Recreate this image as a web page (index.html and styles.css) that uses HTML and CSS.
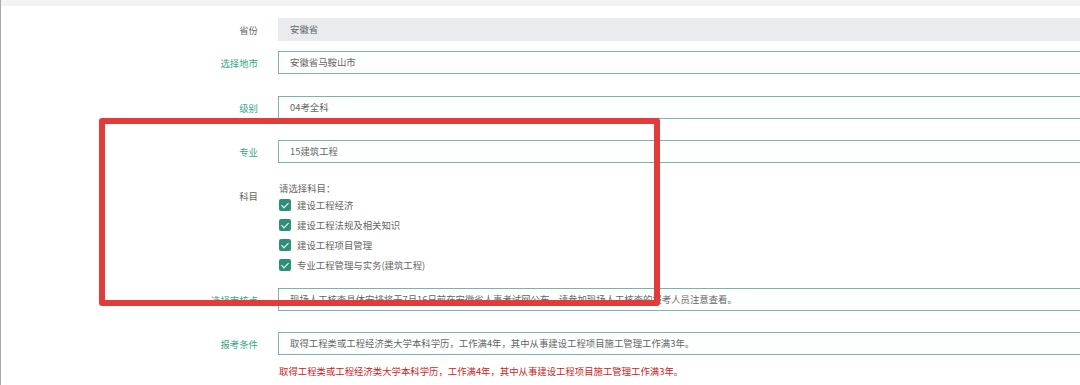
FILE: index.html
```html
<!DOCTYPE html>
<html lang="zh-CN">
<head>
  <meta charset="UTF-8" />
  <title>报名信息</title>
  <link rel="stylesheet" href="styles.css">
</head>
<body>
  <div class="topbar"></div>
  <div class="page">
    <form class="form">
      <div class="row row-first">
        <label class="label">省份</label>
        <div class="field field-disabled">安徽省</div>
      </div>
      <div class="row">
        <label class="label label-hl">选择地市</label>
        <div class="field">安徽省马鞍山市</div>
      </div>
      <div class="row row-tight">
        <label class="label label-hl">级别</label>
        <div class="field">04考全科</div>
      </div>
      <div class="row">
        <label class="label label-hl">专业</label>
        <div class="field">15建筑工程</div>
      </div>
      <div class="row row-top row-subjects">
        <label class="label label-subject">科目</label>
        <div class="options">
          <div class="hint">请选择科目：</div>
          <div class="option"><span class="check"></span>建设工程经济</div>
          <div class="option"><span class="check"></span>建设工程法规及相关知识</div>
          <div class="option"><span class="check"></span>建设工程项目管理</div>
          <div class="option"><span class="check"></span>专业工程管理与实务(建筑工程)</div>
        </div>
      </div>
      <div class="row row-tight">
        <label class="label label-hl">选择审核点</label>
        <div class="field">现场人工核查具体安排将于7月16日前在安徽省人事考试网公布，请参加现场人工核查的报考人员注意查看。</div>
      </div>
      <div class="row row-last">
        <label class="label label-hl">报考条件</label>
        <div class="field">取得工程类或工程经济类大学本科学历，工作满4年，其中从事建设工程项目施工管理工作满3年。</div>
      </div>
      <div class="note">取得工程类或工程经济类大学本科学历，工作满4年，其中从事建设工程项目施工管理工作满3年。</div>
    </form>
    <!-- annotation box drawn over the form -->
    <div class="mark"></div>
  </div>
</body>
</html>
```

FILE: styles.css
```css
html, body {
  margin: 0;
  height: 100%;
  overflow: hidden;
}

body {
  font-family: "Noto Sans CJK SC", "Noto Sans", sans-serif;
  font-size: 9.4px;
  color: #555;
  background: #fff;
  border-left: 1px solid #a9a9a9;
}

.topbar {
  height: 6px;
  background: #f3f3f3;
}

.page {
  position: relative;
}

.form {
  padding-top: 12px;
}

.row {
  display: flex;
  align-items: center;
  margin-bottom: 22px;
}

.row-first {
  margin-bottom: 10px;
}

.row-tight {
  margin-bottom: 21px;
}

.row-top {
  align-items: flex-start;
}

.row-subjects {
  margin-top: -4px;
  margin-bottom: 13px;
}

.row-last {
  margin-bottom: 0;
}

.label {
  flex-shrink: 0;
  width: 277px;
  padding-right: 20px;
  box-sizing: border-box;
  text-align: right;
  color: #666;
  line-height: 14px;
}

.label-hl {
  color: #34a487;
}

.label-subject {
  padding-top: 8px;
  color: #666;
}

.field {
  flex: 1;
  height: 23px;
  line-height: 21px;
  box-sizing: border-box;
  border: 1px solid #7db3a6;
  border-right: 0;
  padding-left: 11px;
  background: #fdfffe;
  color: #666;
  white-space: nowrap;
  overflow: hidden;
}

.field-disabled {
  border-color: #e9ebee;
  background: #e9ebee;
}

.options {
  padding-left: 1px;
}

.hint {
  line-height: 14px;
  color: #666;
}

.option {
  display: flex;
  align-items: center;
  height: 20px;
  color: #666;
}

.check {
  width: 12px;
  height: 12px;
  border-radius: 2px;
  background: #2c8f78;
  margin-right: 6px;
  position: relative;
}

.check::after {
  content: "";
  position: absolute;
  left: 4px;
  top: 1.5px;
  width: 3px;
  height: 6px;
  border: solid #fff;
  border-width: 0 1.5px 1.5px 0;
  transform: rotate(45deg);
}

.note {
  margin: 9px 0 0 278px;
  line-height: 14px;
  color: #c81e1e;
}

.mark {
  position: absolute;
  left: 98px;
  top: 112px;
  width: 561px;
  height: 188px;
  box-sizing: border-box;
  border: 6px solid #e23b3b;
  border-radius: 3px;
}
```
